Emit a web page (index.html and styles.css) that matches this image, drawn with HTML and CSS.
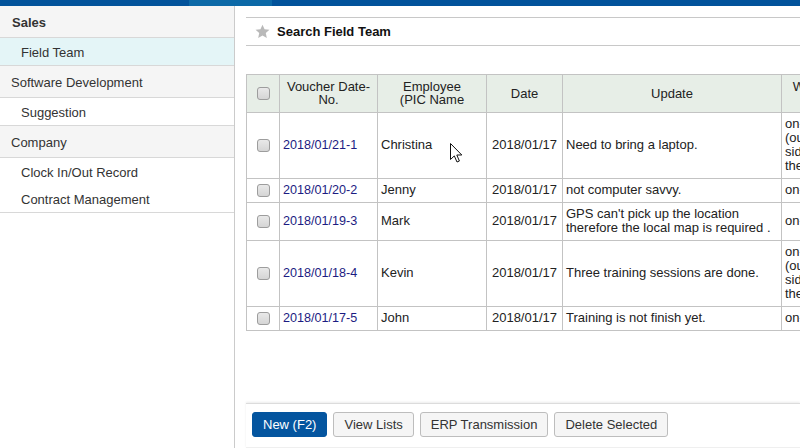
FILE: index.html
```html
<!DOCTYPE html>
<html>
<head>
<meta charset="utf-8">
<link rel="stylesheet" href="styles.css">
</head>
<body>
<div class="topbar"><div class="topbar-tab"></div></div>
<div class="app">
  <aside class="sidebar">
    <div class="nav-group bold">Sales</div>
    <div class="nav-item active">Field Team</div>
    <div class="nav-group">Software Development</div>
    <div class="nav-item">Suggestion</div>
    <div class="nav-group">Company</div>
    <div class="nav-item no-border">Clock In/Out Record</div>
    <div class="nav-item">Contract Management</div>
  </aside>
  <main class="main">
    <div class="page-head">
      <svg class="star" width="15" height="15" viewBox="0 0 16 16"><polygon points="8,0.8 10.2,5.6 15.4,6.1 11.5,9.6 12.6,14.8 8,12.2 3.4,14.8 4.5,9.6 0.6,6.1 5.8,5.6" fill="#b9b9b9"/></svg>
      <span class="page-title">Search Field Team</span>
    </div>
    <div class="table-wrap">
      <table class="grid">
        <colgroup>
          <col class="c-check"><col class="c-voucher"><col class="c-emp"><col class="c-date"><col class="c-update"><col class="c-type">
        </colgroup>
        <thead>
          <tr>
            <th><span class="cb"></span></th>
            <th>Voucher Date-<br>No.</th>
            <th>Employee<br>(PIC Name</th>
            <th>Date</th>
            <th>Update</th>
            <th>Working<br>Type</th>
          </tr>
        </thead>
        <tbody>
          <tr>
            <td class="center"><span class="cb"></span></td>
            <td><a class="link">2018/01/21-1</a></td>
            <td>Christina</td>
            <td class="center">2018/01/17</td>
            <td>Need to bring a laptop.</td>
            <td class="nowrap">on-site<br>(outside<br>side of<br>the office)</td>
          </tr>
          <tr>
            <td class="center"><span class="cb"></span></td>
            <td><a class="link">2018/01/20-2</a></td>
            <td>Jenny</td>
            <td class="center">2018/01/17</td>
            <td>not computer savvy.</td>
            <td class="nowrap">on-site</td>
          </tr>
          <tr>
            <td class="center"><span class="cb"></span></td>
            <td><a class="link">2018/01/19-3</a></td>
            <td>Mark</td>
            <td class="center">2018/01/17</td>
            <td>GPS can't pick up the location therefore the local map is required .</td>
            <td class="nowrap">on-site</td>
          </tr>
          <tr>
            <td class="center"><span class="cb"></span></td>
            <td><a class="link">2018/01/18-4</a></td>
            <td>Kevin</td>
            <td class="center">2018/01/17</td>
            <td>Three training sessions are done.</td>
            <td class="nowrap">on-site<br>(outside<br>side of<br>the office)</td>
          </tr>
          <tr>
            <td class="center"><span class="cb"></span></td>
            <td><a class="link">2018/01/17-5</a></td>
            <td>John</td>
            <td class="center">2018/01/17</td>
            <td>Training is not finish yet.</td>
            <td class="nowrap">on-site</td>
          </tr>
        </tbody>
      </table>
    </div>
    <div class="footer">
      <button class="btn primary">New (F2)</button>
      <button class="btn">View Lists</button>
      <button class="btn">ERP Transmission</button>
      <button class="btn">Delete Selected</button>
    </div>
  </main>
</div>
<svg class="cursor" width="14" height="21" viewBox="0 0 14 21"><path d="M0.5 0.5 L0.5 16.5 L4.3 12.9 L7 19 L9.4 18 L6.8 12 L11.8 12 Z" fill="#fff" stroke="#111" stroke-width="1" stroke-linejoin="round"/></svg>
</body>
</html>
```
FILE: styles.css
```css
html, body {
  margin: 0;
  padding: 0;
}
body {
  width: 800px;
  height: 448px;
  overflow: hidden;
  font-family: "Liberation Sans", Arial, sans-serif;
  font-size: 13px;
  color: #333;
  background: #fff;
  position: relative;
}
.topbar {
  height: 6px;
  background: #02539b;
  display: flex;
}
.topbar-tab {
  margin-left: 189px;
  width: 83px;
  background: #0c69a7;
}
.app {
  display: flex;
  height: 442px;
}
.sidebar {
  width: 234px;
  flex-shrink: 0;
  border-right: 1px solid #cbcbcb;
  background: #fff;
}
.nav-group {
  height: 30px;
  padding-top: 1px;
  line-height: 31px;
  padding-left: 11px;
  background: #f5f5f5;
  border-bottom: 1px solid #d8d8d8;
  color: #333;
}
.nav-group.bold {
  font-weight: bold;
  padding-left: 12px;
}
.nav-item {
  height: 26px;
  padding-top: 1px;
  line-height: 27px;
  padding-left: 21px;
  border-bottom: 1px solid #d8d8d8;
  color: #333;
}
.nav-item.active {
  background: #e4f5f7;
}
.nav-item.no-border {
  border-bottom: none;
}
.main {
  flex: 1;
  min-width: 0;
  display: flex;
  flex-direction: column;
  padding-left: 11px;
  overflow: hidden;
}
.page-head {
  margin-top: 11px;
  height: 27px;
  border-top: 1px solid #c8c8c8;
  border-bottom: 1px solid #c8c8c8;
  display: flex;
  align-items: center;
  padding-left: 9px;
  gap: 7px;
}
.page-title {
  font-weight: bold;
  color: #111;
}
.table-wrap {
  margin-top: 28px;
}
.grid {
  border-collapse: collapse;
  table-layout: fixed;
  width: 605px;
  color: #222;
}
.c-check { width: 33px; }
.c-voucher { width: 98px; }
.c-emp { width: 109px; }
.c-date { width: 76px; }
.c-update { width: 219px; }
.c-type { width: 70px; }
.grid th {
  background: #e7eee7;
  font-weight: normal;
  line-height: 13px;
  padding: 5px 3px 6px;
  border: 1px solid #c3c3c3;
  text-align: center;
  vertical-align: middle;
  color: #222;
}
.grid td {
  line-height: 14px;
  padding: 4px 3px 5px;
  border: 1px solid #c3c3c3;
  vertical-align: middle;
  text-align: left;
}
.grid td.center {
  text-align: center;
}
.grid td.nowrap {
  white-space: nowrap;
  overflow: hidden;
}
.link {
  color: #1c1c82;
  font-size: 12.6px;
  text-decoration: none;
}
.cb {
  display: inline-block;
  width: 11px;
  height: 11px;
  border: 1px solid #9d9d9d;
  border-radius: 3px;
  background: linear-gradient(#e9e9e9, #d5d5d5);
  vertical-align: middle;
}
.footer {
  margin-top: auto;
  border-top: 1px solid #dcdcdc;
  box-shadow: 0 -1px 2px #ececec;
  border-bottom: 1px solid #efefef;
  padding: 8px 6px 10px;
  display: flex;
  gap: 6px;
}
.btn {
  height: 25px;
  padding: 0 10px;
  border: 1px solid #bdbdbd;
  border-radius: 3px;
  background: #f5f5f5;
  font-family: "Liberation Sans", Arial, sans-serif;
  font-size: 13px;
  color: #333;
  margin: 0;
}
.btn.primary {
  background: #04559f;
  border-color: #04559f;
  color: #fff;
}
.cursor {
  position: absolute;
  left: 450px;
  top: 143px;
}
```
